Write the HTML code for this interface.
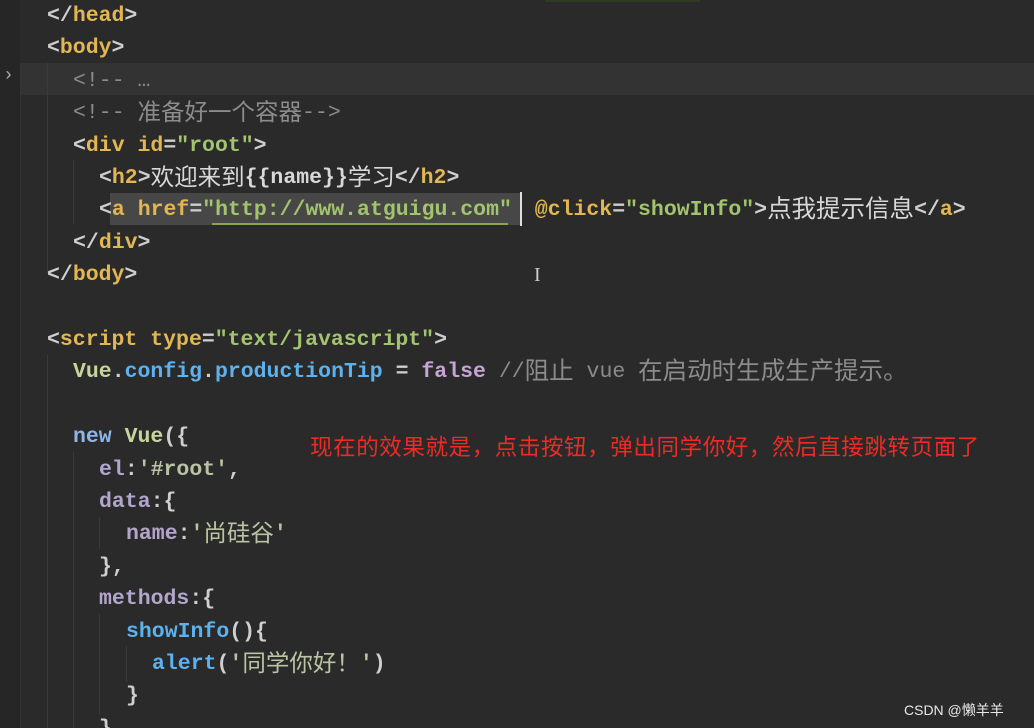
<!DOCTYPE html>
<html><head><meta charset="utf-8"><style>
html,body{margin:0;padding:0;overflow:hidden;width:1034px;height:728px}
body{background:#2a2a2a;position:relative;font-family:"Liberation Mono","Noto Sans CJK SC",monospace;font-size:21.5px;font-weight:bold;color:#d4d4d4}
.ln{position:absolute;left:0;height:32.4px;line-height:32.4px;white-space:pre}
.p{color:#cfcfcf}.t{color:#e2b653}.a{color:#e2b653}.s{color:#a3c46f}.c{color:#8c8c8c;font-weight:normal}
.v{color:#c8d49c}.b{color:#5cb2ee}.f{color:#c7a3d6}.n{color:#8fb5e8}.k{color:#b3a5cc}.w{color:#d8d8d8}.sq{color:#b8c4a4}
.cj{font-family:"Noto Sans CJK SC",sans-serif;font-weight:normal;font-size:23.5px;line-height:0;position:relative;top:2px}
.g{position:absolute;width:1px;background:#3a3a3a}
</style></head><body>
<div style="position:absolute;left:0;top:0;width:20px;height:728px;background:#262626"></div>
<div style="position:absolute;left:20px;top:63px;width:1014px;height:32px;background:#333333"></div>
<div style="position:absolute;left:3px;top:66px;color:#aaa;font-size:18px;font-weight:normal">›</div>
<div style="position:absolute;left:545px;top:0;width:155px;height:2px;background:#2f3a22"></div>
<div class="g" style="left:20px;top:63px;height:665px;background:#353535"></div>
<div class="g" style="left:47px;top:63px;height:210px"></div>
<div class="g" style="left:73px;top:160px;height:64px"></div>
<div class="g" style="left:47px;top:355px;height:373px"></div>
<div class="g" style="left:73px;top:452px;height:276px"></div>
<div class="g" style="left:99px;top:517px;height:32px"></div>
<div class="g" style="left:99px;top:614px;height:100px"></div>
<div class="g" style="left:126px;top:646px;height:36px"></div>
<div style="position:absolute;left:110px;top:193px;width:410px;height:32px;background:#474747"></div>
<div style="position:absolute;left:212px;top:223px;width:296px;height:2px;background:#8aa64a"></div>
<div style="position:absolute;left:520px;top:192px;width:2px;height:34px;background:#ddd"></div>

<div class="ln" style="top:0px;left:47px"><span class="p">&lt;/</span><span class="t">head</span><span class="p">&gt;</span></div>
<div class="ln" style="top:32.4px;left:47px"><span class="p">&lt;</span><span class="t">body</span><span class="p">&gt;</span></div>
<div class="ln" style="top:64.8px;left:73px"><span class="c">&lt;!-- …</span></div>
<div class="ln" style="top:97.2px;left:73px"><span class="c">&lt;!-- <span class="cj">准备好一个容器</span>--&gt;</span></div>
<div class="ln" style="top:129.6px;left:73px"><span class="p">&lt;</span><span class="t">div</span> <span class="a">id</span><span class="p">=</span><span class="s">"root"</span><span class="p">&gt;</span></div>
<div class="ln" style="top:162px;left:99px"><span class="p">&lt;</span><span class="t">h2</span><span class="p">&gt;</span><span class="w cj">欢迎来到</span><span class="w">{{name}}</span><span class="w cj">学习</span><span class="p">&lt;/</span><span class="t">h2</span><span class="p">&gt;</span></div>
<div class="ln" style="top:194.4px;left:99px"><span class="p">&lt;</span><span class="t">a</span> <span class="a">href</span><span class="p">=</span><span class="s">"http://www.atguigu.com"</span> <span class="a" style="margin-left:10px">@click</span><span class="p">=</span><span class="s">"showInfo"</span><span class="p">&gt;</span><span class="w cj" style="font-size:24.5px">点我提示信息</span><span class="p">&lt;/</span><span class="t">a</span><span class="p">&gt;</span></div>
<div class="ln" style="top:226.8px;left:73px"><span class="p">&lt;/</span><span class="t">div</span><span class="p">&gt;</span></div>
<div class="ln" style="top:259.2px;left:47px"><span class="p">&lt;/</span><span class="t">body</span><span class="p">&gt;</span></div>
<div class="ln" style="top:324px;left:47px"><span class="p">&lt;</span><span class="t">script</span> <span class="a">type</span><span class="p">=</span><span class="s">"text/javascript"</span><span class="p">&gt;</span></div>
<div class="ln" style="top:356.4px;left:73px"><span class="v">Vue</span><span class="p">.</span><span class="b">config</span><span class="p">.</span><span class="b">productionTip</span> <span class="p">=</span> <span class="f">false</span> <span class="c">//<span class="cj" style="font-size:24.5px">阻止</span> vue <span class="cj" style="font-size:24.5px">在启动时生成生产提示。</span></span></div>
<div class="ln" style="top:421.2px;left:73px"><span class="n">new</span> <span class="v">Vue</span><span class="p">({</span></div>
<div class="ln" style="top:453.6px;left:99px"><span class="k">el</span><span class="p">:</span><span class="sq">'#root'</span><span class="p">,</span></div>
<div class="ln" style="top:486px;left:99px"><span class="k">data</span><span class="p">:{</span></div>
<div class="ln" style="top:518.4px;left:126px"><span class="k">name</span><span class="p">:</span><span class="sq">'<span class="cj">尚硅谷</span>'</span></div>
<div class="ln" style="top:550.8px;left:99px"><span class="p">},</span></div>
<div class="ln" style="top:583.2px;left:99px"><span class="k">methods</span><span class="p">:{</span></div>
<div class="ln" style="top:615.6px;left:126px"><span class="b">showInfo</span><span class="p">(){</span></div>
<div class="ln" style="top:648px;left:152px"><span class="b">alert</span><span class="p">(</span><span class="sq">'<span class="cj">同学你好！</span>'</span><span class="p">)</span></div>
<div class="ln" style="top:680.4px;left:126px"><span class="p">}</span></div>
<div class="ln" style="top:712.8px;left:99px"><span class="p">},</span></div>

<div style="position:absolute;left:310px;top:430px;color:#ee2a24;font-family:'Noto Sans CJK SC',sans-serif;font-weight:normal;font-size:22.5px;line-height:32px;white-space:nowrap;letter-spacing:0.6px">现在的效果就是，点击按钮，弹出同学你好，然后直接跳转页面了</div>
<div style="position:absolute;left:534px;top:264px;color:#ccc;font-weight:normal;font-size:20px;font-family:'Liberation Serif',serif">I</div>
<div style="position:absolute;left:904px;top:700px;color:#e8e8e8;font-family:'Liberation Sans','Noto Sans CJK SC',sans-serif;font-weight:normal;font-size:14px;line-height:20px">CSDN @懒羊羊</div>
</body></html>
